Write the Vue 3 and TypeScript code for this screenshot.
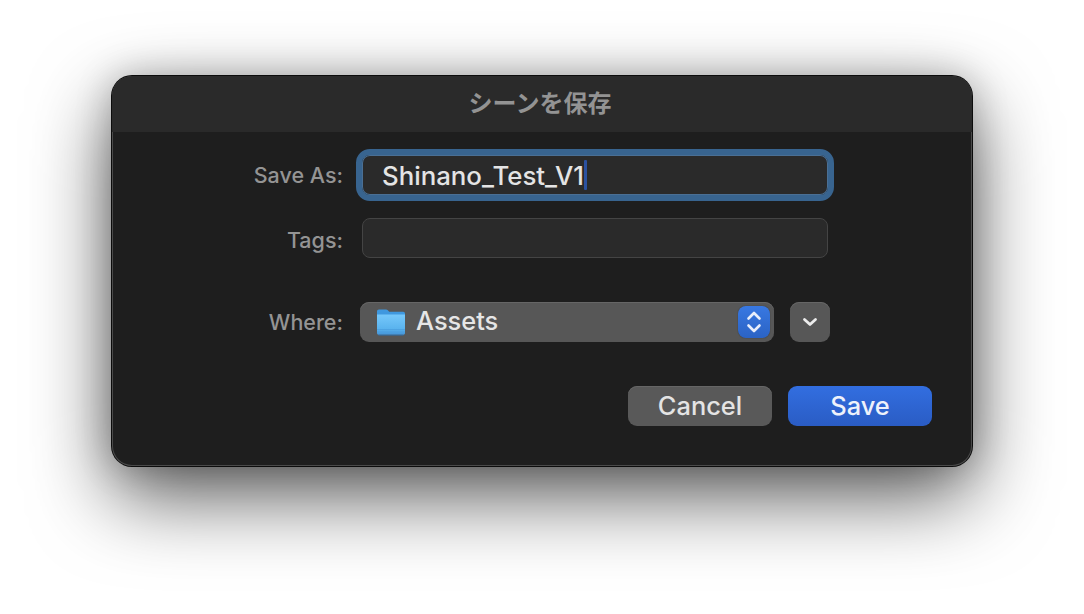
<script setup lang="ts">
const fileName: string = 'Shinano_Test_V1'
</script>

<template>
  <div class="page">
    <section class="window">
      <header class="titlebar">シーンを保存</header>
      <div class="form">
        <div class="row save-row">
          <label class="label">Save As:</label>
          <div class="field focused">
            <span class="value">{{ fileName }}</span><span class="caret"></span>
          </div>
        </div>
        <div class="row tags-row">
          <label class="label">Tags:</label>
          <div class="field"></div>
        </div>
        <div class="row where-row">
          <label class="label">Where:</label>
          <div class="where-controls">
            <div class="popup">
              <svg class="folder" width="32" height="28" viewBox="0 0 32 28">
                <defs>
                  <linearGradient id="folderFront" x1="0" y1="0" x2="0" y2="1">
                    <stop offset="0" stop-color="#76c8fb" />
                    <stop offset="0.7" stop-color="#5ab3ee" />
                    <stop offset="1" stop-color="#4595d8" />
                  </linearGradient>
                </defs>
                <path d="M2 3.5C2 2.4 2.8 1.5 4 1.5h7c.8 0 1.3.3 1.8.8l1.4 1.4h14c1 0 1.8.8 1.8 1.8V10H2z" fill="#3f98df" />
                <path d="M2 6.5h28V25c0 1-.8 1.8-1.8 1.8H3.8C2.8 26.8 2 26 2 25z" fill="url(#folderFront)" />
                <path d="M2 21.5h28M2 24h28" stroke="#4a9fdf" stroke-width="0.8" fill="none" />
                <path d="M3.5 27.2h25" stroke="#2f6ea8" stroke-width="0.8" fill="none" />
              </svg>
              <span class="popup-text">Assets</span>
              <span class="stepper">
                <svg width="18" height="26" viewBox="0 0 18 26" fill="none" stroke="#e8eefb" stroke-width="2.6" stroke-linecap="round" stroke-linejoin="round">
                  <path d="M3.5 9.5 9 4l5.5 5.5" />
                  <path d="M3.5 16.5 9 22l5.5-5.5" />
                </svg>
              </span>
            </div>
            <div class="disclosure">
              <svg width="16" height="10" viewBox="0 0 16 10" fill="none" stroke="#ececec" stroke-width="2.8" stroke-linecap="round" stroke-linejoin="round">
                <path d="M2.5 2.5 8 7.5l5.5-5" />
              </svg>
            </div>
          </div>
        </div>
        <div class="actions">
          <button class="btn cancel" type="button">Cancel</button>
          <button class="btn primary" type="button">Save</button>
        </div>
      </div>
    </section>
  </div>
</template>

<style scoped>
.page {
  width: 1084px;
  height: 614px;
  box-sizing: border-box;
  padding: 76px 0 0 112px;
  background: #fff;
  overflow: hidden;
  font-family: Inter, "Liberation Sans", "Noto Sans CJK JP", sans-serif;
}
.window {
  width: 860px;
  height: 390px;
  border-radius: 20px;
  background: #1e1e1e;
  box-shadow:
    inset 0 0 0 1px #4a4a4a,
    0 0 0 1px #0c0c0c,
    0 30px 80px rgba(0, 0, 0, 0.66),
    0 0 36px rgba(0, 0, 0, 0.22);
  overflow: hidden;
}
.titlebar {
  height: 56px;
  box-sizing: border-box;
  padding-right: 4px;
  background: #2a2a2a;
  color: #939393;
  font: 700 24px/52px "Noto Sans CJK JP", sans-serif;
  text-align: center;
}
.form {
  display: flex;
  flex-direction: column;
}
.row {
  display: flex;
  align-items: center;
}
.save-row {
  margin-top: 23px;
}
.tags-row {
  margin-top: 23px;
}
.where-row {
  margin-top: 44px;
}
.label {
  width: 231px;
  padding-right: 19px;
  box-sizing: content-box;
  text-align: right;
  color: #949494;
  font-size: 21.5px;
  line-height: 26px;
  font-weight: 450;
}
.tags-row .label {
  padding-top: 4px;
}
.field {
  width: 466px;
  height: 40px;
  box-sizing: border-box;
  display: flex;
  align-items: center;
  padding-left: 20px;
  border-radius: 8px;
  background: #2a2a2a;
  border: 1px solid #444;
}
.field.focused {
  border: 0;
  outline: 6px solid #38648f;
  outline-offset: 0;
  box-shadow: inset 0 0 0 1px #4a6f94;
}
.value {
  color: #e4e4e4;
  font-size: 25.8px;
  font-weight: 450;
}
.caret {
  width: 3px;
  height: 30px;
  background: #2c519f;
  border-radius: 1px;
}
.where-controls {
  display: flex;
  gap: 16px;
  margin-left: -2px;
}
.popup {
  width: 414px;
  height: 40px;
  box-sizing: border-box;
  display: flex;
  align-items: center;
  padding: 0 4px 0 15px;
  border-radius: 9px;
  background: #575757;
  box-shadow: inset 0 1px 0 #666;
}
.folder {
  flex: none;
}
.popup-text {
  margin-left: 9px;
  color: #e6e6e6;
  font-size: 25.4px;
  font-weight: 450;
  line-height: 36px;
  flex: 1;
  padding-bottom: 2px;
}
.stepper {
  width: 32px;
  height: 32px;
  display: flex;
  align-items: center;
  justify-content: center;
  border-radius: 8px;
  background: linear-gradient(#3878e2, #2b63c4);
  box-shadow: 0 0 1px #222;
}
.disclosure {
  width: 40px;
  height: 40px;
  display: flex;
  align-items: center;
  justify-content: center;
  border-radius: 9px;
  background: #575757;
  box-shadow: inset 0 1px 0 #666;
}
.actions {
  display: flex;
  justify-content: flex-end;
  gap: 16px;
  margin-top: 44px;
  padding-right: 40px;
}
.btn {
  width: 144px;
  height: 40px;
  border: 0;
  padding: 0 0 2px;
  border-radius: 9px;
  font-family: inherit;
  font-size: 25.4px;
  font-weight: 450;
  color: #e4e4e4;
}
.cancel {
  background: #595959;
  box-shadow: inset 0 1px 0 #666;
}
.primary {
  background: linear-gradient(#326ee0, #2a5cc4);
  color: #eef2fb;
}
</style>
